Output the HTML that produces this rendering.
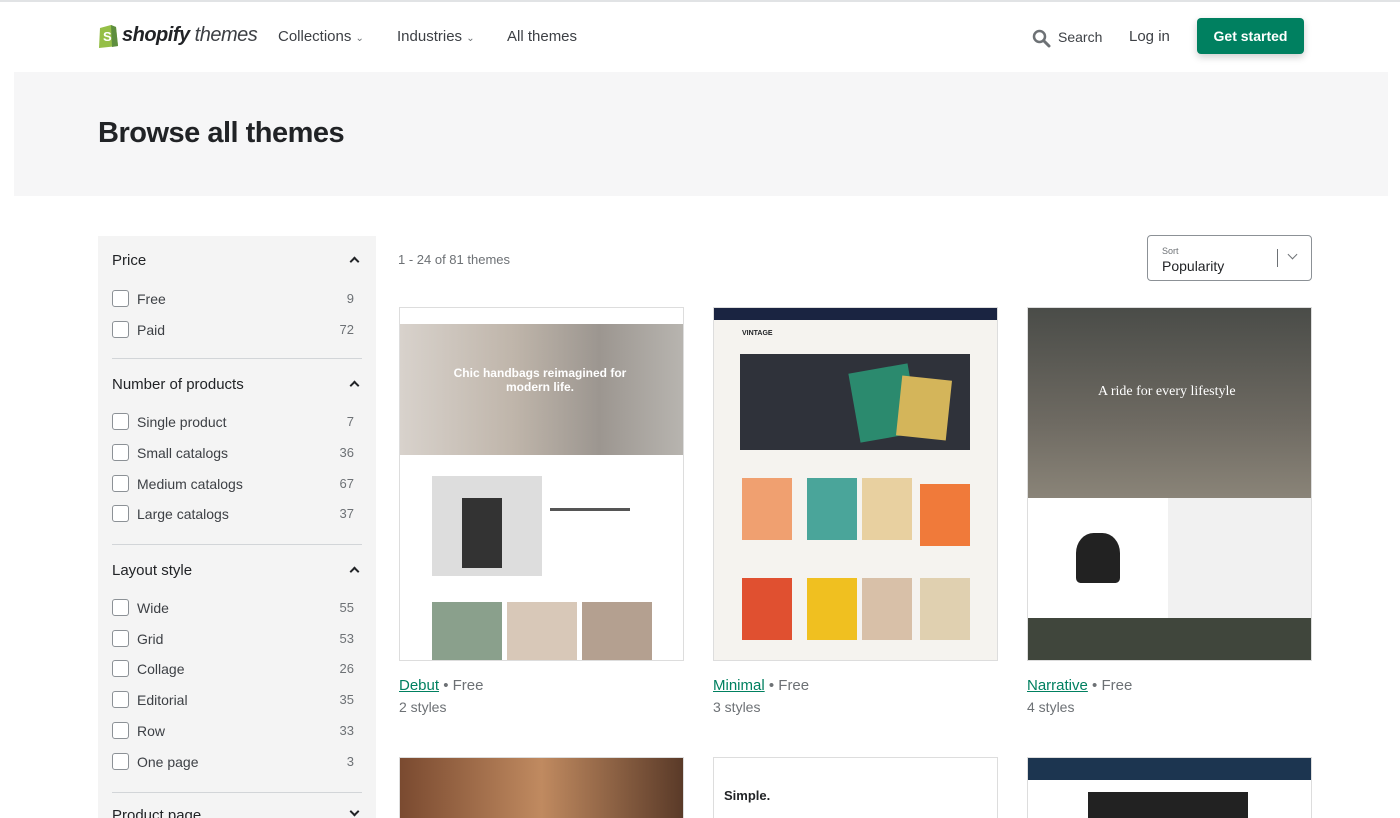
<!DOCTYPE html>
<html><head><meta charset="utf-8"><style>
*{margin:0;padding:0;box-sizing:border-box}
html,body{width:1400px;height:818px;overflow:hidden}
body{background:#fff;font-family:"Liberation Sans",sans-serif;color:#212326;position:relative}
.a{position:absolute}
.nav{font-size:15px;color:#3d4045}
.side{left:98px;top:236px;width:278px;height:600px;background:#f4f4f4}
.h{position:absolute;left:14px;font-size:15px;color:#212326}
.car{position:absolute;right:18px;width:7px;height:7px;border-left:2px solid #212326;border-top:2px solid #212326;transform:rotate(45deg)}
.car.d{transform:rotate(225deg)}
.row{position:absolute;left:14px;width:246px;font-size:14px;color:#3d4045}
.row i{position:absolute;left:0;top:-1px;width:17px;height:17px;border:1.5px solid #8c9196;border-radius:3px;background:#fff}
.row span{position:absolute;left:25px}
.row b{position:absolute;right:4px;font-weight:normal;color:#6d7175;font-size:13px}
.hr{position:absolute;left:14px;width:250px;border-top:1px solid #d2d5d8}
.card{position:absolute;width:285px;height:354px;border:1px solid #ddd;overflow:hidden;background:#fff}
.t{position:absolute;font-size:15px}
.t a{color:#008060;text-decoration:underline}
.t em{font-style:normal;color:#6d7175}
.st{position:absolute;font-size:14px;color:#6d7175}
</style></head><body>
<div class="a" style="left:0;top:0;width:1400px;height:2px;background:#e1e3e5"></div>
<svg class="a" style="left:97px;top:22px" width="22" height="26" viewBox="0 0 22 26"><path d="M3 6 L14 3 L19 5 L21 24 L2 26 Z" fill="#95bf47"/><path d="M14 3 L19 5 L21 24 L15 25 Z" fill="#5e8e3e"/><text x="6" y="19" font-size="13" font-weight="bold" fill="#fff" font-family="Liberation Sans">S</text></svg>
<div class="a" style="left:122px;top:24px;font-size:20px;font-weight:bold;font-style:italic;letter-spacing:-0.5px">shopify<span style="font-weight:normal;color:#3d4045"> themes</span></div>
<div class="a nav" style="left:278px;top:28px">Collections <span style="font-size:10px;color:#6d7175">&#8964;</span></div>
<div class="a nav" style="left:397px;top:28px">Industries <span style="font-size:10px;color:#6d7175">&#8964;</span></div>
<div class="a nav" style="left:507px;top:28px">All themes</div>
<svg class="a" style="left:1032px;top:29px" width="19" height="19" viewBox="0 0 19 19"><circle cx="7.5" cy="7.5" r="5.5" fill="none" stroke="#6d7175" stroke-width="2.5"/><path d="M11.5 11.5 L17 17" stroke="#6d7175" stroke-width="3" stroke-linecap="round"/></svg>
<div class="a nav" style="left:1058px;top:29px;font-size:14px">Search</div>
<div class="a nav" style="left:1129px;top:28px">Log in</div>
<div class="a" style="left:1197px;top:18px;width:107px;height:36px;background:#008060;border-radius:4px;color:#fff;font-size:14px;font-weight:bold;text-align:center;line-height:36px;box-shadow:0 3px 8px rgba(0,0,0,.2)">Get started</div>
<div class="a" style="left:14px;top:72px;width:1374px;height:124px;background:#f6f6f7"></div>
<div class="a" style="left:98px;top:117px;font-size:29px;font-weight:bold;letter-spacing:-0.5px">Browse all themes</div>
<div class="a side">
<div class="h" style="top:16px">Price</div><div class="car" style="top:22px"></div>
<div class="row" style="top:55px"><i></i><span>Free</span><b>9</b></div>
<div class="row" style="top:86px"><i></i><span>Paid</span><b>72</b></div>
<div class="hr" style="top:122px"></div>
<div class="h" style="top:140px">Number of products</div><div class="car" style="top:146px"></div>
<div class="row" style="top:178px"><i></i><span>Single product</span><b>7</b></div>
<div class="row" style="top:209px"><i></i><span>Small catalogs</span><b>36</b></div>
<div class="row" style="top:240px"><i></i><span>Medium catalogs</span><b>67</b></div>
<div class="row" style="top:270px"><i></i><span>Large catalogs</span><b>37</b></div>
<div class="hr" style="top:308px"></div>
<div class="h" style="top:326px">Layout style</div><div class="car" style="top:332px"></div>
<div class="row" style="top:364px"><i></i><span>Wide</span><b>55</b></div>
<div class="row" style="top:395px"><i></i><span>Grid</span><b>53</b></div>
<div class="row" style="top:425px"><i></i><span>Collage</span><b>26</b></div>
<div class="row" style="top:456px"><i></i><span>Editorial</span><b>35</b></div>
<div class="row" style="top:487px"><i></i><span>Row</span><b>33</b></div>
<div class="row" style="top:518px"><i></i><span>One page</span><b>3</b></div>
<div class="hr" style="top:556px"></div>
<div class="h" style="top:571px">Product page</div><div class="car d" style="top:572px"></div>
</div>
<div class="a" style="left:398px;top:252px;font-size:13px;color:#6d7175">1 - 24 of 81 themes</div>
<div class="a" style="left:1147px;top:235px;width:165px;height:46px;border:1px solid #8c9196;border-radius:4px">
<div class="a" style="left:14px;top:10px;font-size:9px;color:#6d7175">Sort</div>
<div class="a" style="left:14px;top:22px;font-size:14px">Popularity</div>
<div class="a" style="left:129px;top:13px;height:18px;border-left:1px solid #6d7175"></div>
<div class="a" style="left:141px;top:15px;width:7px;height:7px;border-right:1.5px solid #6d7175;border-bottom:1.5px solid #6d7175;transform:rotate(45deg)"></div>
</div>
<div class="card" style="left:399px;top:307px">
<div class="a" style="left:0;top:16px;width:285px;height:131px;background:linear-gradient(90deg,#d8d2cc,#bfb5aa 40%,#9c9690 70%,#b8b5b0)"></div>
<div class="a" style="left:40px;top:58px;width:200px;text-align:center;color:#fff;font-size:12px;font-weight:bold">Chic handbags reimagined for modern life.</div>
<div class="a" style="left:32px;top:168px;width:110px;height:100px;background:#ddd"></div>
<div class="a" style="left:62px;top:190px;width:40px;height:70px;background:#333"></div>
<div class="a" style="left:150px;top:200px;width:80px;height:40px;border-top:3px solid #555"></div>
<div class="a" style="left:32px;top:294px;width:70px;height:60px;background:#8aa08c"></div>
<div class="a" style="left:107px;top:294px;width:70px;height:60px;background:#d8c8b8"></div>
<div class="a" style="left:182px;top:294px;width:70px;height:60px;background:#b4a090"></div>
</div>
<div class="t" style="left:399px;top:677px"><a>Debut</a> <em>• Free</em></div>
<div class="st" style="left:399px;top:699px">2 styles</div>
<div class="card" style="left:713px;top:307px;background:#f5f3ef">
<div class="a" style="left:0;top:0;width:285px;height:12px;background:#1a2441"></div>
<div class="a" style="left:28px;top:22px;font-size:7px;font-weight:bold">VINTAGE</div>
<div class="a" style="left:26px;top:46px;width:230px;height:96px;background:#2f323a"></div>
<div class="a" style="left:140px;top:60px;width:60px;height:70px;background:#2b8a6e;transform:rotate(-10deg)"></div>
<div class="a" style="left:185px;top:70px;width:50px;height:60px;background:#d4b55a;transform:rotate(6deg)"></div>
<div class="a" style="left:28px;top:170px;width:50px;height:62px;background:#f0a070"></div>
<div class="a" style="left:93px;top:170px;width:50px;height:62px;background:#4aa59a"></div>
<div class="a" style="left:148px;top:170px;width:50px;height:62px;background:#e8d0a0"></div>
<div class="a" style="left:206px;top:176px;width:50px;height:62px;background:#f07a3a"></div>
<div class="a" style="left:28px;top:270px;width:50px;height:62px;background:#e05030"></div>
<div class="a" style="left:93px;top:270px;width:50px;height:62px;background:#f0c020"></div>
<div class="a" style="left:148px;top:270px;width:50px;height:62px;background:#d8c0a8"></div>
<div class="a" style="left:206px;top:270px;width:50px;height:62px;background:#e0d0b0"></div>
</div>
<div class="t" style="left:713px;top:677px"><a>Minimal</a> <em>• Free</em></div>
<div class="st" style="left:713px;top:699px">3 styles</div>
<div class="card" style="left:1027px;top:307px">
<div class="a" style="left:0;top:0;width:285px;height:190px;background:linear-gradient(180deg,#4a4c48,#6e6a62 60%,#8a8478)"></div>
<div class="a" style="left:70px;top:76px;color:#fff;font-size:14px;font-family:'Liberation Serif',serif">A ride for every lifestyle</div>
<div class="a" style="left:0;top:190px;width:140px;height:120px;background:#fff"></div>
<div class="a" style="left:48px;top:225px;width:44px;height:50px;background:#222;border-radius:40% 40% 10% 10%"></div>
<div class="a" style="left:140px;top:190px;width:145px;height:120px;background:#f1f1f1"></div>
<div class="a" style="left:0;top:310px;width:285px;height:44px;background:#40463c"></div>
</div>
<div class="t" style="left:1027px;top:677px"><a>Narrative</a> <em>• Free</em></div>
<div class="st" style="left:1027px;top:699px">4 styles</div>
<div class="card" style="left:399px;top:757px;background:linear-gradient(90deg,#7a4a30,#c08a60 50%,#5a3a28)"></div>
<div class="card" style="left:713px;top:757px"><div class="a" style="left:10px;top:30px;font-size:13px;font-weight:bold">Simple.</div></div>
<div class="card" style="left:1027px;top:757px"><div class="a" style="left:0;top:0;width:285px;height:22px;background:#1c3550"></div><div class="a" style="left:60px;top:34px;width:160px;height:30px;background:#222"></div></div>
</body></html>
